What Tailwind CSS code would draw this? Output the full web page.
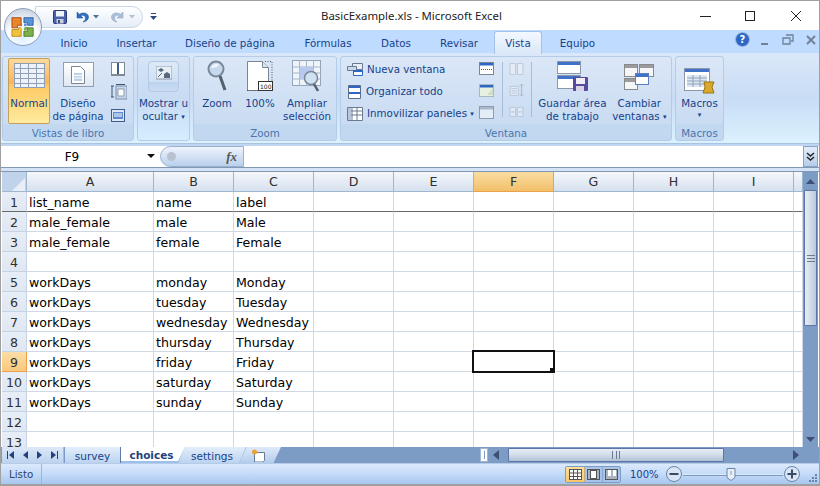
<!DOCTYPE html>
<html lang="es">
<head>
<meta charset="UTF-8">
<title>BasicExample.xls - Microsoft Excel</title>
<script src="https://cdn.jsdelivr.net/npm/@tailwindcss/browser@4"></script>
</head>
<body class="bg-white">
<div class="relative w-[820px] h-[486px] overflow-hidden flex flex-col border border-[#a0a0a0] border-b-2 bg-[#bfdbff] font-['DejaVu_Sans',sans-serif] text-[10.3px] leading-[13px] text-[#15428b]">

  <!-- boton office y barra de acceso rapido -->
  <div class="absolute left-[3px] top-[7px] w-[38px] h-[38px] rounded-full z-20 bg-[radial-gradient(circle_at_50%_80%,#dff0ff,#ffffff_45%,#b8c6d8_95%)] border border-[#8c9fb8] flex items-center justify-center">
    <svg width="24" height="22" viewBox="0 0 26 26" preserveAspectRatio="none">
      <path d="M1 2h10v9H7v3H1z" fill="#e8862a" stroke="#a8431a"/>
      <path d="M14 2h10v9h-6V8h-4z" fill="#5a93d8" stroke="#2a5d9e"/>
      <path d="M1 16h7v-2h3v10H1z" fill="#f2c33a" stroke="#b98a1a"/>
      <path d="M15 14h9v10H14v-6h4v-3z" fill="#7cb04a" stroke="#487a25"/>
      <rect x="9" y="9" width="3" height="3" fill="#cf6a2a"/><rect x="14" y="9" width="3" height="3" fill="#5a93d8"/>
      <rect x="9" y="14" width="3" height="3" fill="#f2c33a"/><rect x="14" y="14" width="3" height="3" fill="#7cb04a"/>
    </svg>
  </div>

  <!-- titulo -->
  <div class="relative h-[29px] shrink-0 bg-white flex items-center">
    <div class="absolute left-[34px] top-[5px] w-[108px] h-[22px] rounded-r-[11px] border border-[#c9d7e8] bg-gradient-to-b from-white to-[#e4edf8] flex items-center pl-[17px] gap-[8px]">
      <svg width="14" height="14" viewBox="0 0 14 14"><rect x="0.5" y="0.5" width="13" height="13" rx="1" fill="#4a60a8" stroke="#2a3a78"/><rect x="3" y="1" width="8" height="5.5" fill="#eef2fa"/><rect x="3.5" y="9" width="7" height="4.5" fill="#c8d0e0"/><rect x="5" y="10" width="2" height="3" fill="#3a4a80"/></svg>
      <svg width="14" height="13" viewBox="0 0 14 13"><path d="M2 1v6h6L5.800 4.800C8 3.600 10.500 4.800 10.500 7c0 1.600-1 3-2.500 4 3-.3 5.500-2.300 5.500-5C13.500 2.500 9 .5 4.300 3.200z" fill="#2e6fc4" stroke="#1c4a8c" stroke-width=".5"/></svg>
      <svg class="-ml-[4px]" width="6" height="4" viewBox="0 0 6 4"><path d="M0 0h6L3 3.500z" fill="#55708f"/></svg>
      <svg class="ml-[4px]" width="14" height="13" viewBox="0 0 14 13"><path d="M12 1v6H6l2.200-2.200C6 3.600 3.500 4.800 3.500 7c0 1.600 1 3 2.500 4C3 10.700.5 8.700.5 6 .5 2.500 5 .5 9.700 3.200z" fill="#a9bfd6" stroke="#8aa0b8" stroke-width=".5"/></svg>
      <svg class="-ml-[4px]" width="6" height="4" viewBox="0 0 6 4"><path d="M0 0h6L3 3.500z" fill="#b4c0cc"/></svg>
    </div>
    <svg class="absolute left-[149px] top-[12px]" width="7" height="8" viewBox="0 0 7 8"><path d="M1 0h5v1H1zM0 3h7L3.500 7z" fill="#2c4a78"/></svg>
    <div class="w-full text-center font-['Noto_Sans',sans-serif] text-[11.4px] leading-4 text-[#222] pl-[3px]">BasicExample.xls - Microsoft Excel</div>
    <svg class="absolute left-[699px] top-[9px]" width="110" height="12" viewBox="0 0 110 12" fill="none" stroke="#222"><path d="M0 6.500h11"/><rect x="45.500" y="1.500" width="9" height="9"/><path d="M91 1l10 10M101 1 91 11"/></svg>
  </div>

  <!-- pestanas -->
  <div class="relative h-[23px] shrink-0 flex items-end pl-[44px] text-[10.3px]">
    <div class="w-[58px] h-[22px] pt-[2px] flex items-center justify-center">Inicio</div>
    <div class="w-[67px] h-[22px] pt-[2px] flex items-center justify-center">Insertar</div>
    <div class="w-[120px] h-[22px] pt-[2px] flex items-center justify-center">Diseño de página</div>
    <div class="w-[76px] h-[22px] pt-[2px] flex items-center justify-center">Fórmulas</div>
    <div class="w-[60px] h-[22px] pt-[2px] flex items-center justify-center">Datos</div>
    <div class="w-[66px] h-[22px] pt-[2px] flex items-center justify-center">Revisar</div>
    <div class="ml-[2px] w-[48px] h-[23px] mb-[-1px] pt-[1px] z-10 flex items-center justify-center rounded-t-[3px] border border-b-0 border-[#a3c2e8] bg-gradient-to-b from-[#f3f8fe] to-[#dbe8f9]">Vista</div>
    <div class="ml-[2px] w-[67px] h-[22px] pt-[2px] flex items-center justify-center">Equipo</div>
    <div class="absolute left-[734px] top-[2px] w-[15px] h-[15px] rounded-full bg-[#2d66c4] border border-[#9db8de] text-white text-[10px] leading-[13px] font-bold text-center">?</div>
    <svg class="absolute left-[760px] top-[4px]" width="58" height="12" viewBox="0 0 58 12"><path d="M0 9h7v2H0z" fill="#6f8299"/><path d="M22 4h7v6h-7zM25 1h7v6h-2" fill="none" stroke="#6f8299" stroke-width="1.300"/><path d="M46 2l8 8M54 2l-8 8" stroke="#6f8299" stroke-width="2"/></svg>
  </div>

  <!-- cinta -->
  <div class="h-[91px] shrink-0 flex gap-[3px] pl-[1px] pt-[3px] bg-gradient-to-b from-[#dbe8f9] via-[#c8dcf5] to-[#dbf2ff] border-b border-[#a9c3e0]">

    <!-- vistas de libro -->
    <section class="w-[132px] h-[85px] flex flex-col rounded-[3px] border border-[#b3cce8] bg-gradient-to-b from-[#dbe7f7] to-[#c5d9f1]">
      <div class="flex-1 flex pl-[5px] pt-[1px] h-[68px]">
        <div class="w-[42px] h-[66px] rounded-[2px] border border-[#c4a05a] bg-[linear-gradient(#fddb9b,#fbb45a_38%,#fdc862_40%,#ffeb9f)] flex flex-col items-center pt-[4px]">
          <svg width="31" height="25" viewBox="0 0 31 25"><rect width="31" height="25" fill="#8f9db4"/><path d="M1 1h29v23H1z" fill="#eef3fa"/><path d="M0 5.500h31M0 10.500h31M0 15.500h31M0 20.500h31M6.500 0v25M14.500 0v25M22.500 0v25" stroke="#8fa0b8"/></svg>
          <div class="mt-[9px]">Normal</div>
        </div>
        <div class="w-[56px] flex flex-col items-center pt-[4px]">
          <div class="w-[31px] h-[25px] border border-[#8ea0b8] bg-gradient-to-b from-white to-[#e0e8f2] flex items-center justify-center">
            <svg width="14" height="18" viewBox="0 0 14 18"><path d="M.5.500h9l4 4v13H.5z" fill="#fff" stroke="#7a8696"/><path d="M3 7h8v8H3z" fill="#bcd0e6"/><path d="M3 9.500h8M3 12h8" stroke="#fff"/></svg>
          </div>
          <div class="mt-[10px] text-center">Diseño<br>de página</div>
        </div>
        <div class="flex flex-col gap-[8px] pl-[5px] pt-[4px]">
          <svg width="14" height="14" viewBox="0 0 14 14"><path d="M0 0h14v14H0z" fill="#7e8a98"/><path d="M1 1h5v11H1zM8 1h5v11H8z" fill="#fff"/><path d="M6 1h2v11H6z" fill="#3f5d8c"/></svg>
          <svg width="16" height="16" viewBox="0 0 16 16"><path d="M0 2v11M-1 2h3M-1 13h3" stroke="#3d5573" transform="translate(1)"/><rect x="5" y="2" width="11" height="13" fill="#c8d8ec" stroke="#7e8fa6"/><rect x="7" y="5" width="6" height="7" fill="#fff" stroke="#8a98aa"/><path d="M5 .500h9" stroke="#3d5573"/></svg>
          <svg class="mt-[1px]" width="14" height="13" viewBox="0 0 14 13"><rect x=".5" y=".5" width="13" height="12" fill="#dfe8f5" stroke="#3f5d8c"/><path d="M2 3h10v7H2z" fill="#5d8ad0"/><path d="M3 5h8M3 7h8" stroke="#fff"/></svg>
        </div>
      </div>
      <div class="h-[16px] text-center bg-[#c2d8f1] text-[#4a76ad] leading-[18px] rounded-b-[3px]">Vistas de libro</div>
    </section>

    <!-- mostrar u ocultar -->
    <section class="w-[53px] h-[85px] flex flex-col items-center rounded-[3px] border border-[#b3cce8] bg-gradient-to-b from-[#d6e4f6] via-[#c7dbf3] to-[#d5eeff]">
      <div class="mt-[4px] w-[31px] h-[31px] rounded-[4px] border border-[#b3c8e2] bg-[linear-gradient(#dde9f8,#cfe0f4_68%,#bdd3ee_70%,#c8dcf3)] flex justify-center pt-[4px]">
        <svg width="16" height="15" viewBox="0 0 16 15"><rect width="16" height="13" fill="#e8eef6" stroke="#8a98aa"/><path d="M2 4l3-2 3 2-3 2zM8 8l3-2 3 2v4H8z" fill="#56697f"/><path d="M2 11l4-4" stroke="#56697f"/></svg>
      </div>
      <div class="mt-[5px] text-center whitespace-nowrap">Mostrar u<br>ocultar <span class="text-[7px] align-[1px]">▾</span></div>
    </section>

    <!-- zoom -->
    <section class="w-[144px] h-[85px] flex flex-col rounded-[3px] border border-[#b3cce8] bg-gradient-to-b from-[#dbe7f7] to-[#c5d9f1]">
      <div class="flex-1 flex">
        <div class="w-[46px] flex flex-col items-center pt-[3px]">
          <svg width="20" height="32" viewBox="0 0 20 32"><circle cx="9" cy="9" r="7.500" fill="#c6d8ee" stroke="#7a8898" stroke-width="2"/><path d="M4 8c1-4 5-5 8-4-1 3-4 4-8 4z" fill="#eef5fc"/><path d="M13 16l5 14" stroke="#55606e" stroke-width="3"/></svg>
          <div class="mt-[5px]">Zoom</div>
        </div>
        <div class="w-[40px] flex flex-col items-center pt-[3px]">
          <svg width="26" height="32" viewBox="0 0 26 32"><path d="M.5 1.500h15l6 6v23H.5z" fill="#fff" stroke="#7a8696"/><path d="M15.500 1.500v6h6" fill="#dde6f0" stroke="#7a8696"/><path d="M18 1.500h7v29" fill="none" stroke="#555" stroke-dasharray="1 1.500"/><path d="M0 30.500h25" stroke="#555" stroke-dasharray="1 1.500"/><rect x="11.500" y="21.500" width="14" height="9" fill="#fff" stroke="#333"/><text x="13" y="29" font-size="6" fill="#222" font-family="DejaVu Sans">100</text></svg>
          <div class="mt-[5px]">100%</div>
        </div>
        <div class="w-[54px] flex flex-col items-center pt-[3px]">
          <svg width="30" height="32" viewBox="0 0 30 32"><rect x=".5" y=".5" width="28" height="25" fill="#eff4fb" stroke="#94a5bb"/><path d="M.5 7h28M.5 13h28M.5 19h28M7.500 .5v25M14.500 .5v25M21.500 .5v25" stroke="#a4b6cc"/><rect x="7.500" y="7" width="14" height="12" fill="#b8c8ee"/><circle cx="19" cy="18" r="6.500" fill="#d0e2f2" stroke="#7a8898" stroke-width="1.500"/><path d="M22 24l4 7" stroke="#55606e" stroke-width="2.500"/></svg>
          <div class="mt-[5px] text-center">Ampliar<br>selección</div>
        </div>
      </div>
      <div class="h-[16px] text-center bg-[#c2d8f1] text-[#4a76ad] leading-[18px] rounded-b-[3px]">Zoom</div>
    </section>

    <!-- ventana -->
    <section class="w-[332px] h-[85px] flex flex-col rounded-[3px] border border-[#b3cce8] bg-gradient-to-b from-[#dbe7f7] to-[#c5d9f1]">
      <div class="flex-1 flex">
        <div class="w-[139px] pl-[6px] pt-[6px] flex flex-col gap-[9px] whitespace-nowrap">
          <div class="flex items-center gap-[4px] h-[13px]">
            <svg width="16" height="13" viewBox="0 0 16 13"><path d="M5.500.5h10v6h-10z" fill="#e6edf6" stroke="#6b7b90"/><path d="M.5 3.500h9v4h-9z" fill="#c9d7e8" stroke="#6b7b90"/><path d="M6.500 7.500h9v5h-9z" fill="#fff" stroke="#2d66c4"/><path d="M6 7h10v2H6z" fill="#2d66c4"/></svg>
            <span>Nueva ventana</span>
          </div>
          <div class="flex items-center gap-[4px] h-[13px]">
            <svg class="ml-[1px] mr-[1px]" width="13" height="14" viewBox="0 0 13 14"><path d="M.5.5h12v13H.5z" fill="#fff" stroke="#5a6f8e"/><path d="M1 1h11v2H1zM1 7h11v2H1z" fill="#2d66c4"/></svg>
            <span>Organizar todo</span>
          </div>
          <div class="flex items-center gap-[4px] h-[13px]">
            <svg width="16" height="14" viewBox="0 0 16 14"><path d="M.5.5h15v13H.5z" fill="#fff" stroke="#6b7b90"/><path d="M.5 4h15M.5 8h15M5 .5v13M10 .5v13" stroke="#6b7b90"/><path d="M1 1h3v12H1z" fill="#b7c6da"/></svg>
            <span>Inmovilizar paneles <span class="text-[7px] align-[1px]">▾</span></span>
          </div>
        </div>
        <div class="w-[23px] pt-[5px] flex flex-col gap-[9px]">
          <svg width="15" height="13" viewBox="0 0 15 13"><rect x=".5" y=".5" width="14" height="12" fill="#fff" stroke="#7a8696"/><path d="M1 1h13v2.500H1z" fill="#2d66c4"/><path d="M2 7.500h11" stroke="#4a5f80" stroke-dasharray="1 1"/></svg>
          <svg width="15" height="13" viewBox="0 0 15 13"><rect x=".5" y=".5" width="14" height="12" fill="#e7f0e2" stroke="#7a8696" stroke-dasharray="1 1"/><path d="M1 1h13v2.500H1z" fill="#2d66c4"/><path d="M8 11l6-7v7z" fill="#cfe0c4"/></svg>
          <svg width="15" height="13" viewBox="0 0 15 13"><rect x=".5" y=".5" width="14" height="12" fill="#e3ecf7" stroke="#8b9bb0"/><path d="M1 1h13v2.500H1z" fill="#a9b8ca"/></svg>
        </div>
        <div class="flex h-[55px] mt-[5px] w-[31px] border-x border-[#a7bdd8] justify-center pt-[1px]">
          <div class="flex flex-col gap-[9px] opacity-60">
            <svg width="15" height="13" viewBox="0 0 15 13"><path d="M.5.5h6v12h-6zM8.500.5h6v12h-6z" fill="#eef2f7" stroke="#a8b4c4"/></svg>
            <svg width="15" height="13" viewBox="0 0 15 13"><path d="M.5 2.500h9v10h-9z" fill="#eef2f7" stroke="#a8b4c4"/><path d="M2 5h6M2 7.500h6M2 10h6" stroke="#a8b4c4"/><path d="M13 0v13M11 2l2-2 2 2M11 11l2 2 2-2" fill="none" stroke="#8b9bb0"/></svg>
            <svg width="15" height="13" viewBox="0 0 15 13"><path d="M.5 2.500h6v10h-6zM8.500 2.500h6v10h-6z" fill="#eef2f7" stroke="#a8b4c4"/><path d="M2 7.500h3M10 7.500h3" stroke="#8b9bb0"/></svg>
          </div>
        </div>
        <div class="w-[71px] flex flex-col items-center pt-[4px] whitespace-nowrap ml-[5px]">
          <svg class="ml-[1px]" width="31" height="30" viewBox="0 0 31 30"><rect x=".5" y=".5" width="23" height="12" fill="#fff" stroke="#8a98aa"/><path d="M1 1h22v3H1z" fill="#3f72c8"/><rect x=".5" y="14.500" width="23" height="13" fill="#fff" stroke="#8a98aa"/><path d="M1 15h22v3H1z" fill="#3f72c8"/><rect x="16" y="16" width="15" height="14" rx="1" fill="#5a4a9c"/><rect x="19" y="17" width="9" height="6" fill="#f0eef8"/><rect x="19" y="25" width="8" height="5" fill="#d8d4e8"/></svg>
          <div class="mt-[6px] text-center">Guardar área<br>de trabajo</div>
        </div>
        <div class="w-[64px] flex flex-col items-center pt-[7px] whitespace-nowrap">
          <svg width="30" height="26" viewBox="0 0 30 26"><rect x=".5" y=".5" width="13" height="12" fill="#f4f6f8" stroke="#8a8a8a"/><path d="M1 1h12v3H1z" fill="#9b9b9b"/><rect x="15.500" y=".5" width="14" height="12" fill="#f4f6f8" stroke="#8a8a8a"/><path d="M16 1h13v3H16z" fill="#9b9b9b"/><rect x=".5" y="14.500" width="13" height="11" fill="#f4f6f8" stroke="#8a8a8a"/><path d="M1 15h12v3H1z" fill="#9b9b9b"/><rect x="11.500" y="9.500" width="13" height="11" fill="#fff" stroke="#5a7fc0"/><path d="M12 10h12v3H12z" fill="#3f72c8"/></svg>
          <div class="mt-[7px] text-center">Cambiar<br>ventanas <span class="text-[7px] align-[1px]">▾</span></div>
        </div>
      </div>
      <div class="h-[16px] text-center bg-[#c2d8f1] text-[#4a76ad] leading-[18px] rounded-b-[3px]">Ventana</div>
    </section>

    <!-- macros -->
    <section class="w-[49px] h-[85px] flex flex-col rounded-[3px] border border-[#b3cce8] bg-gradient-to-b from-[#dbe7f7] to-[#c5d9f1]">
      <div class="flex-1 flex flex-col items-center pt-[11px]">
        <svg width="31" height="26" viewBox="0 0 31 26"><rect x=".5" y=".5" width="25" height="22" fill="#fff" stroke="#8a98aa"/><path d="M1 1h24v3H1z" fill="#3f72c8"/><path d="M3 7h20v12H3z" fill="#dfe7f2"/><path d="M3 10h20M3 13h20M3 16h20M9 7v12M16 7v12" stroke="#8fa2bc"/><path d="M20 14h10l-2 5 2 6H19l2-6z" fill="#d9a92e" stroke="#9a7414"/></svg>
        <div class="mt-[3px]">Macros</div>
        <div class="text-[7px] leading-[11px]">▾</div>
      </div>
      <div class="h-[16px] text-center bg-[#c2d8f1] text-[#4a76ad] leading-[18px] rounded-b-[3px]">Macros</div>
    </section>
  </div>

  <!-- barra de formulas -->
  <div class="h-[24px] shrink-0 pt-[2px] bg-[#bfd6f2]">
    <div class="h-[22px] flex bg-white border-b border-[#7f98b4]">
      <div class="w-[159px] flex items-center pl-[1px] pt-[1px] relative text-[12px] text-black">
        <div class="w-[140px] text-center">F9</div>
        <svg class="absolute left-[146px] top-[8px]" width="8" height="4" viewBox="0 0 8 4"><path d="M0 0h8L4 4z" fill="#111"/></svg>
      </div>
      <div class="w-[84px] rounded-l-[11px] border-y border-l border-r border-[#9ab0ce] bg-gradient-to-b from-[#eef4fc] to-[#b9d0ec] flex items-center justify-between pl-[6px] pr-[6px]">
        <span class="w-[9px] h-[9px] rounded-full bg-[#b8c2cf]"></span>
        <span class="font-['Liberation_Serif',serif] italic font-bold text-[13px] text-[#555]">fx</span>
      </div>
      <div class="flex-1"></div>
      <div class="w-[15px] mr-[1px] bg-gradient-to-b from-[#e4eefb] to-[#b5cdea] border border-[#8aa4c8] flex items-center justify-center">
        <svg width="9" height="10" viewBox="0 0 9 10" fill="none" stroke="#222" stroke-width="1.500"><path d="M1 1l3.500 3L8 1M1 5l3.500 3L8 5"/></svg>
      </div>
    </div>
  </div>
  <div class="h-[4px] shrink-0 bg-[#d4e4f6] border-b border-[#8197b2]"></div>

  <!-- hoja -->
  <div class="h-[275px] shrink-0 flex bg-white pl-[1px]">
    <div class="w-[801px] h-[275px] overflow-hidden">
      <table class="table-fixed w-[801px] border-separate border-spacing-0 text-[12.6px] leading-[17px] text-black [&_td]:border-r [&_td]:border-b [&_td]:border-[#d0d7e5] [&_td]:pl-[2px] [&_td]:pt-[2px] [&_td]:whitespace-nowrap [&_td]:overflow-visible [&_th]:font-normal [&_th]:text-[#303030] [&_th]:p-0 [&_tr]:h-[20px]">
        <colgroup><col class="w-[25px]"><col class="w-[127px]"><col class="w-[80px]"><col class="w-[80px]"><col class="w-[80px]"><col class="w-[80px]"><col class="w-[80px]"><col class="w-[80px]"><col class="w-[80px]"><col class="w-[80px]"><col class="w-[9px]"></colgroup>
        <thead class="[&_th]:bg-gradient-to-b [&_th]:from-[#f5f8fc] [&_th]:to-[#d6e0ee] [&_th]:border-r [&_th]:border-b [&_th]:border-[#9eb6ce]">
          <tr>
            <th class="!bg-none !bg-[#c1d3ea]"><svg class="ml-[10px] mt-[5px]" width="13" height="13" viewBox="0 0 13 13"><path d="M13 0v13H0z" fill="#e8eff8"/></svg></th>
            <th>A</th><th>B</th><th>C</th><th>D</th><th>E</th><th class="!from-[#f9dca0] !to-[#f2c06a] !border-[#eda04a]">F</th><th>G</th><th>H</th><th>I</th><th></th>
          </tr>
        </thead>
        <tbody class="[&_th]:bg-gradient-to-b [&_th]:from-[#e8eef7] [&_th]:to-[#dfe7f2] [&_th]:border-r [&_th]:border-b [&_th]:border-[#c5d3e4] [&_th]:pt-[2px]">
          <tr class="[&_td]:border-b-[#6a6a6a] [&_th]:border-b-[#6a6a6a]"><th>1</th><td>list_name</td><td>name</td><td>label</td><td></td><td></td><td></td><td></td><td></td><td></td><td></td></tr>
          <tr><th>2</th><td>male_female</td><td>male</td><td>Male</td><td></td><td></td><td></td><td></td><td></td><td></td><td></td></tr>
          <tr><th>3</th><td>male_female</td><td>female</td><td>Female</td><td></td><td></td><td></td><td></td><td></td><td></td><td></td></tr>
          <tr><th>4</th><td></td><td></td><td></td><td></td><td></td><td></td><td></td><td></td><td></td><td></td></tr>
          <tr><th>5</th><td>workDays</td><td>monday</td><td>Monday</td><td></td><td></td><td></td><td></td><td></td><td></td><td></td></tr>
          <tr><th>6</th><td>workDays</td><td>tuesday</td><td>Tuesday</td><td></td><td></td><td></td><td></td><td></td><td></td><td></td></tr>
          <tr><th>7</th><td>workDays</td><td>wednesday</td><td>Wednesday</td><td></td><td></td><td></td><td></td><td></td><td></td><td></td></tr>
          <tr><th>8</th><td>workDays</td><td>thursday</td><td>Thursday</td><td></td><td></td><td></td><td></td><td></td><td></td><td></td></tr>
          <tr><th class="!from-[#fbdda6] !to-[#f8c97e] !border-[#eda04a]">9</th><td>workDays</td><td>friday</td><td>Friday</td><td></td><td></td><td class="relative"><div class="absolute left-[-2px] top-[-2px] w-[83px] h-[23px] border-2 border-[#111]"><div class="absolute right-[-3px] bottom-[-3px] w-[5px] h-[5px] bg-[#111] border border-white border-t-0 border-l-0 box-content"></div></div></td><td></td><td></td><td></td><td></td></tr>
          <tr><th>10</th><td>workDays</td><td>saturday</td><td>Saturday</td><td></td><td></td><td></td><td></td><td></td><td></td><td></td></tr>
          <tr><th>11</th><td>workDays</td><td>sunday</td><td>Sunday</td><td></td><td></td><td></td><td></td><td></td><td></td><td></td></tr>
          <tr><th>12</th><td></td><td></td><td></td><td></td><td></td><td></td><td></td><td></td><td></td><td></td></tr>
          <tr><th>13</th><td></td><td></td><td></td><td></td><td></td><td></td><td></td><td></td><td></td><td></td></tr>
        </tbody>
      </table>
    </div>
    <!-- barra vertical -->
    <div class="w-[15px] h-[275px] flex flex-col bg-[#7c9cc6] relative">
      <div class="h-[18px] flex items-center justify-center"><svg width="9" height="5" viewBox="0 0 9 5"><path d="M0 5h9L4.500 0z" fill="#3d4f74"/></svg></div>
      <div class="h-[136px] mx-[1px] rounded-[1px] border border-[#5d75a8] bg-gradient-to-r from-[#e6edf6] via-[#d3dde9] to-[#b8c8dc] flex items-center justify-center">
        <div class="w-[8px] h-[7px] border-y border-[#6b7c92] flex flex-col justify-center"><div class="h-[1px] bg-[#6b7c92]"></div></div>
      </div>
      <svg class="absolute left-[3px] top-[265px]" width="9" height="5" viewBox="0 0 9 5"><path d="M0 0h9L4.500 5z" fill="#3d4f74"/></svg>
    </div>
  </div>

  <!-- pestanas de hojas -->
  <div class="h-[16px] shrink-0 flex items-stretch bg-[#7c9cc6] text-[10.5px] pl-[1px]">
    <div class="w-[62px] bg-gradient-to-b from-[#dbe8f8] to-[#bcd3ef] flex items-center justify-around px-[1px] border-r border-[#a3bcdb]">
      <svg width="7" height="8" viewBox="0 0 7 8"><path d="M0 0h1v8H0zM7 0v8L2 4z" fill="#23427a"/></svg>
      <svg width="5" height="8" viewBox="0 0 5 8"><path d="M5 0v8L0 4z" fill="#23427a"/></svg>
      <svg width="5" height="8" viewBox="0 0 5 8"><path d="M0 0v8l5-4z" fill="#23427a"/></svg>
      <svg width="7" height="8" viewBox="0 0 7 8"><path d="M7 0H6v8h1zM0 0v8l5-4z" fill="#23427a"/></svg>
    </div>
    <div class="ml-[1px] w-[56px] pt-[3px] flex items-center justify-center bg-gradient-to-b from-[#e3eefb] to-[#bcd3ef] border-r border-[#5d7ba6] leading-none">survey</div>
    <div class="w-[64px] pt-[2px] pr-[3px] flex items-center justify-center bg-white font-bold border-b-2 border-[#9cc0ec] leading-none text-[#23427a] [clip-path:polygon(0_0,100%_0,88%_100%,0_100%)]">choices</div>
    <div class="-ml-[7px] w-[68px] pt-[3px] flex items-center justify-center bg-gradient-to-b from-[#e3eefb] to-[#bcd3ef] leading-none [clip-path:polygon(10%_0,100%_0,90%_100%,0_100%)]">settings</div>
    <div class="-ml-[7px] w-[42px] pr-[4px] flex items-center justify-center bg-gradient-to-b from-[#dfeafa] to-[#b3ccec] [clip-path:polygon(18%_0,100%_0,82%_100%,0_100%)]">
      <svg width="15" height="13" viewBox="0 0 15 13"><path d="M3.500 3.500h10v8l-1.500 1.500H3.500z" fill="#fff" stroke="#6b7b90"/><circle cx="3.500" cy="3" r="2.500" fill="#e8a23a"/></svg>
    </div>
    <!-- barra horizontal -->
    <div class="ml-[199px] w-[8px] my-[1px] bg-white border border-[#9fb6d4] flex justify-center"><div class="w-[1px] h-[8px] mt-[2px] bg-[#7c9cc6]"></div></div>
    <svg class="ml-[5px] mt-[3px]" width="6" height="10" viewBox="0 0 6 10"><path d="M6 0v10L0 5z" fill="#3d4f74"/></svg>
    <div class="ml-[9px] w-[216px] my-[1px] rounded-[1px] border border-[#5d75a8] bg-gradient-to-b from-[#e6edf6] via-[#d3dde9] to-[#b0c0d4] flex items-center justify-center">
      <div class="w-[8px] h-[8px] border-x border-[#6b7c92] flex justify-center"><div class="w-[1px] bg-[#6b7c92]"></div></div>
    </div>
    <svg class="ml-[69px] mt-[3px]" width="6" height="10" viewBox="0 0 6 10"><path d="M0 0v10l6-5z" fill="#3d4f74"/></svg>
  </div>

  <!-- barra de estado -->
  <div class="flex-1 flex items-center bg-gradient-to-b from-[#dbe9fb] via-[#c4dbf8] to-[#a8c6ee] border-t border-[#b5cbe8] pl-[1px] relative text-[#2b4770]">
    <div class="w-[40px] h-full flex items-center pl-[7px] border-r border-[#9ab5d8]">Listo</div>
    <div class="absolute left-[564px] top-[2px] w-[56px] h-[17px] flex rounded-[2px] border border-[#7f9cc4] bg-[#a8c4ea]">
      <div class="w-[19px] flex items-center justify-center bg-gradient-to-b from-[#fddf9c] to-[#fcc668] border-r border-[#c7ae78]">
        <svg width="13" height="11" viewBox="0 0 13 11"><rect x=".5" y=".5" width="12" height="10" fill="#fff" stroke="#555"/><path d="M.5 4h12M.5 7.500h12M4.500 .5v10M8.500 .5v10" stroke="#555"/></svg>
      </div>
      <div class="w-[18px] flex items-center justify-center border-r border-[#8aa6cc]">
        <svg width="13" height="11" viewBox="0 0 13 11"><rect x=".5" y=".5" width="12" height="10" fill="#aab4c0" stroke="#555"/><rect x="3.500" y="1.500" width="6" height="8" fill="#fff" stroke="#555"/></svg>
      </div>
      <div class="flex-1 flex items-center justify-center">
        <svg width="13" height="11" viewBox="0 0 13 11"><rect x=".5" y=".5" width="12" height="10" fill="#aab4c0" stroke="#555"/><path d="M3 1h3v6H3zM8 1h3v6H8z" fill="#fff"/></svg>
      </div>
    </div>
    <div class="absolute left-[629px] top-[4px] text-[#1a3a8c] text-[10px]">100%</div>
    <svg class="absolute left-[664px] top-[1px]" width="142" height="18" viewBox="0 0 142 18">
      <circle cx="9" cy="9" r="7.500" fill="#d9e5f4" stroke="#6b85aa"/><path d="M4.500 9h9" stroke="#3a4a66" stroke-width="2"/>
      <path d="M18 9.500h100" stroke="#dfeafa" stroke-width="1"/><path d="M18 10.500h100" stroke="#7c97bd" stroke-width="1"/>
      <path d="M62 3.500h8v9l-4 3-4-3z" fill="#e6eef8" stroke="#6b85aa"/><path d="M66 6v4" stroke="#8a9db8"/>
      <circle cx="127" cy="9" r="7.500" fill="#d9e5f4" stroke="#6b85aa"/><path d="M122.500 9h9M127 4.500v9" stroke="#3a4a66" stroke-width="2"/>
    </svg>
    <svg class="absolute left-[807px] top-[9px]" width="10" height="10" viewBox="0 0 10 10"><path d="M7 1h2v2H7zM4 4h2v2H4zM7 4h2v2H7zM1 7h2v2H1zM4 7h2v2H4zM7 7h2v2H7z" fill="#6b85aa"/></svg>
  </div>
</div>
</body>
</html>
